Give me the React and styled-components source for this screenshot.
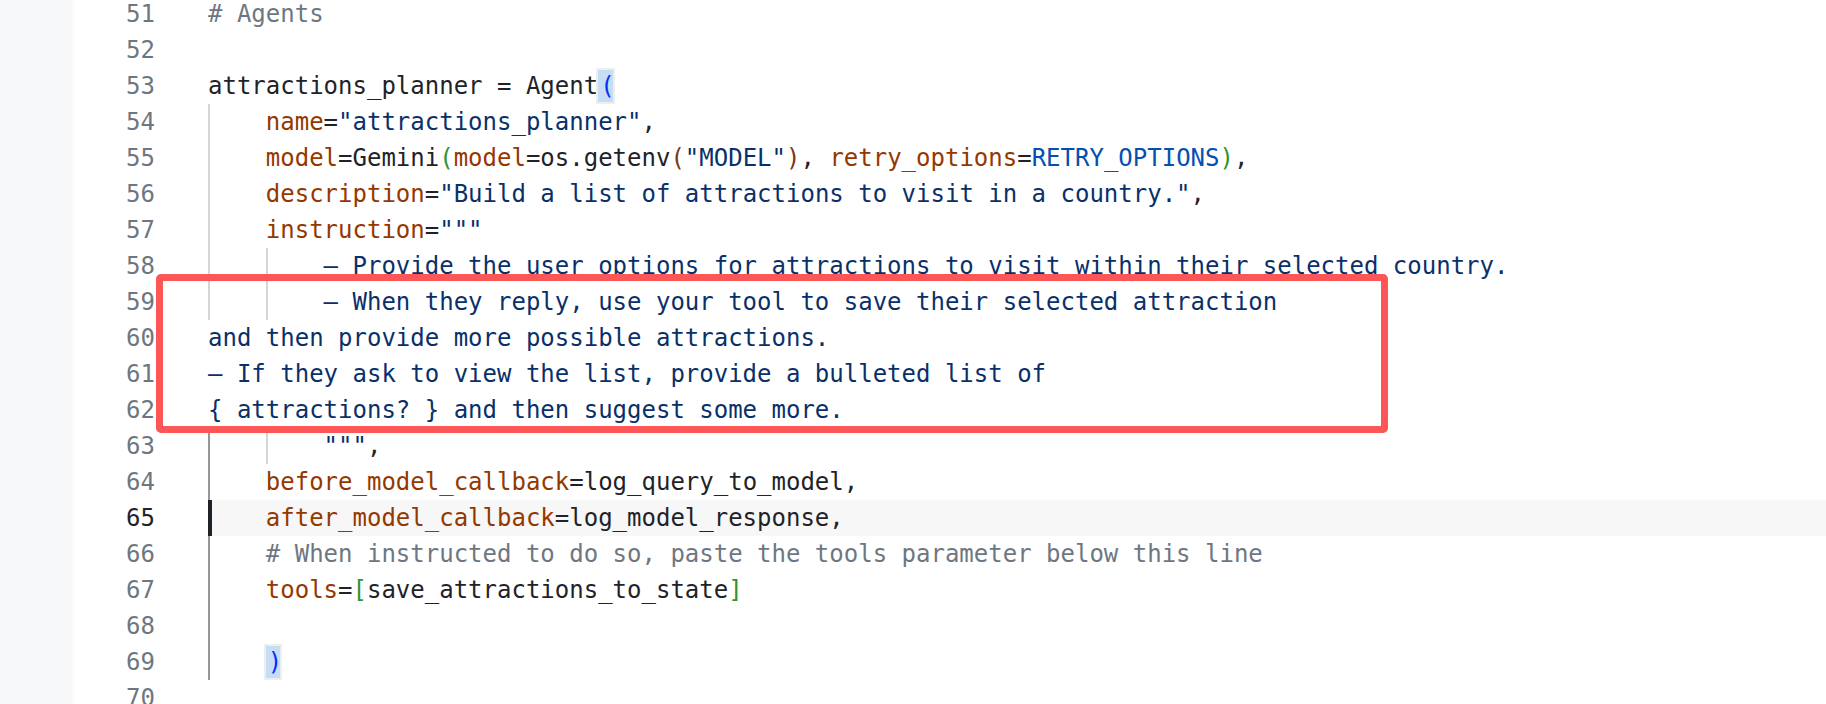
import React from 'react';
import styled, { createGlobalStyle, css } from 'styled-components';

const GlobalStyle = createGlobalStyle`
  html, body {
    margin: 0;
    padding: 0;
    background: #ffffff;
    overflow: hidden;
  }
`;

const Page = styled.div`
  position: relative;
  display: flex;
  width: 1826px;
  height: 704px;
  overflow: hidden;
  background: #ffffff;
`;

const SidePanel = styled.div`
  width: 72px;
  flex-shrink: 0;
  background: #f7f8fa;
  box-shadow: 1px 0 6px rgba(0, 0, 0, 0.035);
`;

const Editor = styled.div`
  display: flex;
  flex: 1;
  margin-top: -4px;
  font-family: "DejaVu Sans Mono", "Liberation Mono", monospace;
  font-size: 24px;
  line-height: 36px;
  color: #1f2328;
`;

const Gutter = styled.div`
  width: 83px;
  flex-shrink: 0;
  text-align: right;
`;

const LineNo = styled.div`
  height: 36px;
  color: ${(p) => (p.$active ? '#1f2328' : '#6e7781')};
`;

const Code = styled.div`
  flex: 1;
  margin-left: 53px;
`;

const Row = styled.div`
  display: flex;
  height: 36px;
  white-space: pre;
  background: ${(p) => (p.$active ? '#f7f7f7' : 'transparent')};
`;

const Guide = styled.span`
  display: inline-block;
  box-sizing: border-box;
  width: 4ch;
  height: 36px;
  flex-shrink: 0;
  ${(p) =>
    p.$kind === 'cursor'
      ? css`border-left: 4px solid #1f2328;`
      : css`
          border-left: 2px solid ${p.$kind === 'dark' ? '#969696' : '#d5d5d5'};
          background: #ffffff;
        `}
`;

const Tok = styled.span`
  color: ${(p) =>
    ({
      c: '#6e7781',
      k: '#953800',
      s: '#0a3069',
      v: '#0550ae',
      b1: '#0431fa',
      b2: '#319331',
      b3: '#7b3814',
      t: '#1f2328',
    }[p.$t] || '#1f2328')};
`;

const Match = styled.span`
  display: inline-block;
  box-sizing: border-box;
  width: calc(1ch + 4px);
  margin: 0 -2px;
  padding-left: 2px;
  height: 36px;
  background: #c6ddf3;
  border: 2px solid #eceff2;
  color: #0431fa;
  line-height: 32px;
`;

const Callout = styled.div`
  position: absolute;
  left: 156px;
  top: 274px;
  width: 1232px;
  height: 159px;
  box-sizing: border-box;
  border: 7px solid #fd5656;
  border-radius: 5px;
  pointer-events: none;
`;

const lines = [
  { n: 51, g: [], t: [['c', '# Agents']] },
  { n: 52, g: [], t: [] },
  {
    n: 53,
    g: [],
    t: [['t', 'attractions_planner = Agent'], ['m', '(']],
  },
  {
    n: 54,
    g: ['light'],
    t: [['k', 'name'], ['t', '='], ['s', '"attractions_planner"'], ['t', ',']],
  },
  {
    n: 55,
    g: ['light'],
    t: [
      ['k', 'model'],
      ['t', '=Gemini'],
      ['b2', '('],
      ['k', 'model'],
      ['t', '=os.getenv'],
      ['b3', '('],
      ['s', '"MODEL"'],
      ['b3', ')'],
      ['t', ', '],
      ['k', 'retry_options'],
      ['t', '='],
      ['v', 'RETRY_OPTIONS'],
      ['b2', ')'],
      ['t', ','],
    ],
  },
  {
    n: 56,
    g: ['light'],
    t: [
      ['k', 'description'],
      ['t', '='],
      ['s', '"Build a list of attractions to visit in a country."'],
      ['t', ','],
    ],
  },
  {
    n: 57,
    g: ['light'],
    t: [['k', 'instruction'], ['t', '='], ['s', '"""']],
  },
  {
    n: 58,
    g: ['light', 'light'],
    t: [['s', '– Provide the user options for attractions to visit within their selected country.']],
  },
  {
    n: 59,
    g: ['light', 'light'],
    t: [['s', '– When they reply, use your tool to save their selected attraction']],
  },
  { n: 60, g: [], t: [['s', 'and then provide more possible attractions.']] },
  { n: 61, g: [], t: [['s', '– If they ask to view the list, provide a bulleted list of']] },
  { n: 62, g: [], t: [['s', '{ attractions? } and then suggest some more.']] },
  { n: 63, g: ['dark', 'light'], t: [['s', '"""'], ['t', ',']] },
  {
    n: 64,
    g: ['dark'],
    t: [['k', 'before_model_callback'], ['t', '=log_query_to_model,']],
  },
  {
    n: 65,
    g: ['cursor'],
    active: true,
    t: [['k', 'after_model_callback'], ['t', '=log_model_response,']],
  },
  {
    n: 66,
    g: ['dark'],
    t: [['c', '# When instructed to do so, paste the tools parameter below this line']],
  },
  {
    n: 67,
    g: ['dark'],
    t: [['k', 'tools'], ['t', '='], ['b2', '['], ['t', 'save_attractions_to_state'], ['b2', ']']],
  },
  { n: 68, g: ['dark'], t: [] },
  { n: 69, g: ['dark'], t: [['m', ')']] },
  { n: 70, g: [], t: [] },
];

const CodeLine = ({ line }) => (
  <Row $active={line.active}>
    {line.g.map((kind, i) => (
      <Guide key={i} $kind={kind} />
    ))}
    {line.t.map(([type, text], i) =>
      type === 'm' ? (
        <Match key={i}>{text}</Match>
      ) : (
        <Tok key={i} $t={type}>
          {text}
        </Tok>
      )
    )}
  </Row>
);

const App = () => (
  <Page>
    <GlobalStyle />
    <SidePanel />
    <Editor>
      <Gutter>
        {lines.map((l) => (
          <LineNo key={l.n} $active={l.active}>
            {l.n}
          </LineNo>
        ))}
      </Gutter>
      <Code>
        {lines.map((l) => (
          <CodeLine key={l.n} line={l} />
        ))}
      </Code>
    </Editor>
    <Callout />
  </Page>
);

export default App;
